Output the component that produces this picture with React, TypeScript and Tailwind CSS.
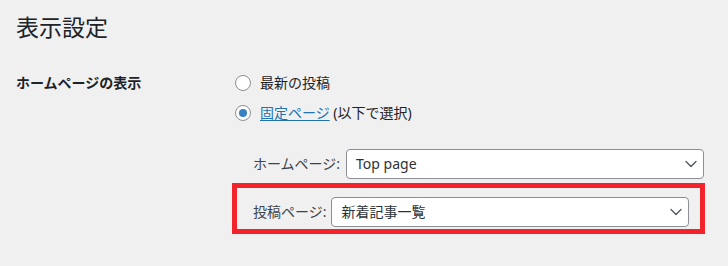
import { ChevronDown } from 'lucide-react';

const font = { fontFamily: '"Noto Sans", "Noto Sans CJK JP", sans-serif' };

function Radio({ checked }: { checked?: boolean }) {
  return (
    <span className="flex h-4 w-4 shrink-0 items-center justify-center rounded-full border border-[#8c8f94] bg-white">
      {checked && <span className="h-2 w-2 rounded-full bg-[#3582c4]" />}
    </span>
  );
}

function Select({ value }: { value: string }) {
  return (
    <div className="flex h-[30px] w-[358px] items-center justify-between rounded-[4px] border border-[#8c8f94] bg-white pl-[9px] pr-[2px] text-[14px] text-[#2c3338]">
      <span>{value}</span>
      <ChevronDown className="h-5 w-5 text-[#50575e]" strokeWidth={1.6} />
    </div>
  );
}

export default function App() {
  return (
    <div className="h-[266px] w-[728px] overflow-hidden bg-[#f0f0f1] pl-4 text-[#1d2327]" style={font}>
      <h1 className="pt-[12px] text-[23px] leading-[30px] font-normal">表示設定</h1>

      <div className="mt-[29px] flex">
        {/* label column */}
        <div className="w-[219px] shrink-0 text-[14px] leading-[24px] font-bold">ホームページの表示</div>

        <div className="flex flex-col text-[14px] leading-[24px]">
          <label className="flex items-center gap-[9px]">
            <Radio />
            <span>最新の投稿</span>
          </label>
          <label className="mt-[6px] flex items-center gap-[9px]">
            <Radio checked />
            <span>
              <a className="text-[#2271b1] underline underline-offset-2">固定ページ</a> (以下で選択)
            </span>
          </label>

          <div className="mt-[24px] flex items-center pl-[18px]">
            <span className="mr-[6px] text-[#3c434a]">ホームページ:</span>
            <Select value="Top page" />
          </div>

          {/* highlighted row */}
          <div className="-ml-[3px] mt-[4px] flex w-[473px] items-center border-[5px] border-[#f2232b] pl-4 pt-[9px] pb-[2px]">
            <span className="mr-[5px] text-[#3c434a]">投稿ページ:</span>
            <Select value="新着記事一覧" />
          </div>
        </div>
      </div>
    </div>
  );
}
